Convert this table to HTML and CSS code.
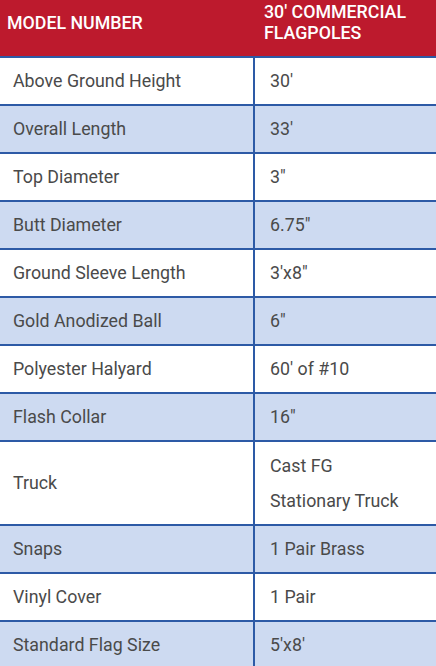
FILE: index.html
```html
<!DOCTYPE html>
<html>
<head>
<meta charset="utf-8">
<link rel="stylesheet" href="styles.css">
</head>
<body>
<table class="spec">
  <colgroup><col class="k"><col class="v"></colgroup>
  <thead>
    <tr class="head">
      <th class="c1">MODEL NUMBER</th>
      <th class="c2">30' COMMERCIAL<br>FLAGPOLES</th>
    </tr>
  </thead>
  <tbody>
    <tr><td class="c1">Above Ground Height</td><td class="c2">30'</td></tr>
    <tr class="alt"><td class="c1">Overall Length</td><td class="c2">33'</td></tr>
    <tr><td class="c1">Top Diameter</td><td class="c2">3"</td></tr>
    <tr class="alt"><td class="c1">Butt Diameter</td><td class="c2">6.75"</td></tr>
    <tr><td class="c1">Ground Sleeve Length</td><td class="c2">3'x8"</td></tr>
    <tr class="alt"><td class="c1">Gold Anodized Ball</td><td class="c2">6"</td></tr>
    <tr><td class="c1">Polyester Halyard</td><td class="c2">60' of #10</td></tr>
    <tr class="alt"><td class="c1">Flash Collar</td><td class="c2">16"</td></tr>
    <tr class="tall"><td class="c1">Truck</td><td class="c2">Cast FG<br>Stationary Truck</td></tr>
    <tr class="alt"><td class="c1">Snaps</td><td class="c2">1 Pair Brass</td></tr>
    <tr><td class="c1">Vinyl Cover</td><td class="c2">1 Pair</td></tr>
    <tr class="alt"><td class="c1">Standard Flag Size</td><td class="c2">5'x8'</td></tr>
  </tbody>
</table>
</body>
</html>
```
FILE: styles.css
```css
html, body {
  margin: 0;
  padding: 0;
  background: #ffffff;
}
.spec {
  width: 436px;
  border-collapse: collapse;
  table-layout: fixed;
  font-family: Roboto, "Liberation Sans", sans-serif;
  font-size: 17.8px;
  color: #4a4a4a;
}
.spec col.k { width: 254px; }
.head th {
  background: #bd1a2d;
  color: #ffffff;
  font-weight: 500;
  text-align: left;
  height: 44px;
  padding: 0 0 12px 0;
  line-height: 21px;
  vertical-align: middle;
}
.head th.c1 { padding-left: 7px; }
.head th.c2 { padding-left: 10px; }
.spec td {
  height: 46px;
  padding: 0;
  border-top: 2px solid #2d5aa6;
  line-height: 20px;
  vertical-align: middle;
}
.spec td.c1 { padding-left: 13px; }
.spec td.c2 { padding-left: 15px; border-left: 2px solid #2d5aa6; }
.spec tr.alt td { background: #cddaf1; }
.spec tr.tall td { height: 82px; }
.spec tr.tall td.c2 { line-height: 35px; }
```
